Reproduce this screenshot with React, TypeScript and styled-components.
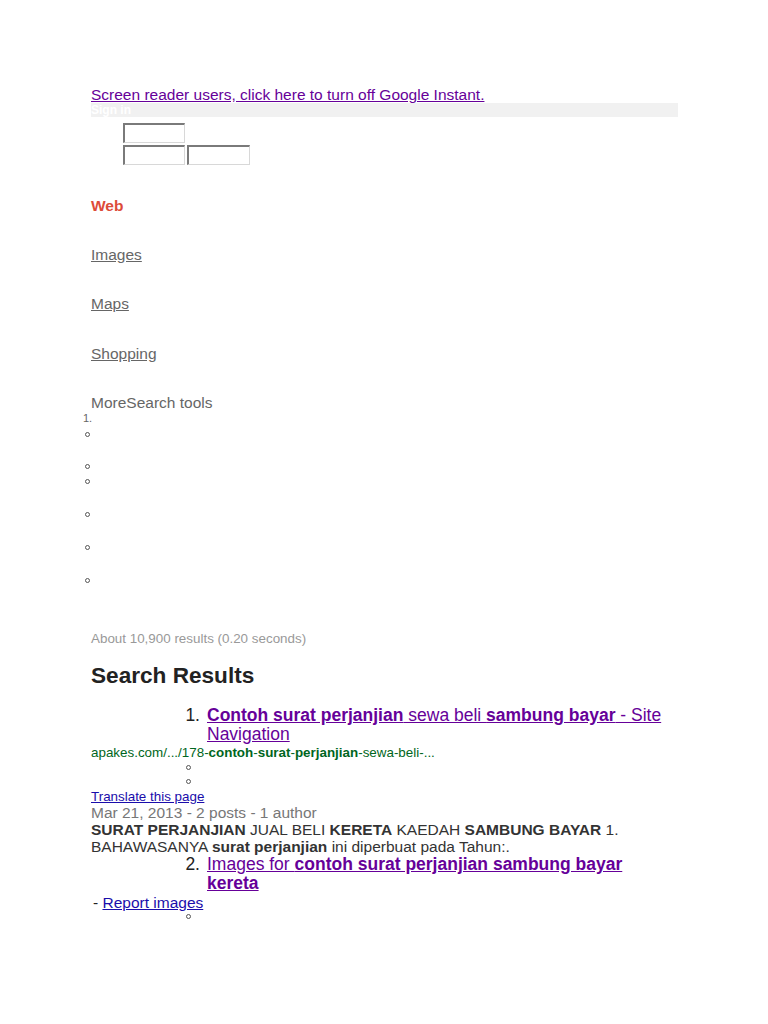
import React from "react";
import styled, { createGlobalStyle } from "styled-components";

const GlobalStyle = createGlobalStyle`
	html, body {
		margin: 0;
		padding: 0;
		background: #fff;
	}
	body {
		font-family: "Liberation Sans", Arial, sans-serif;
		color: #222;
	}
`;

const Page = styled.div`
	width: 768px;
	min-height: 1024px;
	padding: 86px 100px 0 91px;
	box-sizing: border-box;
`;

const InstantLink = styled.a`
	display: block;
	font-size: 15.5px;
	line-height: 17px;
	color: #660099;
	text-decoration: underline;
`;

const SignInBar = styled.div`
	height: 14px;
	width: 587px;
	background: #f1f1f1;
`;

const SignIn = styled.span`
	display: block;
	color: #fff;
	font-size: 12px;
	font-weight: bold;
	line-height: 14px;
`;

const InputRow = styled.div<{ $top: number }>`
	display: flex;
	gap: 2px;
	margin: ${(p) => p.$top}px 0 0 32px;
`;

const Field = styled.input<{ $w: number }>`
	box-sizing: border-box;
	width: ${(p) => p.$w}px;
	height: 20px;
	margin: 0;
	padding: 0;
	background: #fff;
	border-style: solid;
	border-width: 2px 1px 1px 2px;
	border-color: #7a7a7a #d8d8d8 #d8d8d8 #7a7a7a;
`;

const Nav = styled.div`
	margin-top: 32px;
`;

const NavItem = styled.a<{ $active?: boolean }>`
	display: block;
	height: 49.2px;
	font-size: 15.5px;
	line-height: 17px;
	color: ${(p) => (p.$active ? "#dd4b39" : "#666")};
	font-weight: ${(p) => (p.$active ? "bold" : "normal")};
	text-decoration: ${(p) => (p.$active ? "none" : "underline")};
`;

const MoreTools = styled.div`
	font-size: 15.5px;
	line-height: 17px;
	color: #666;
`;

const SmallNum = styled.div`
	font-size: 11px;
	line-height: 13px;
	color: #666;
	margin: 1px 0 3px -8px;
`;

const BulletRow = styled.div<{ $h: number; $indent?: boolean }>`
	height: ${(p) => p.$h}px;
	display: flex;
	align-items: center;
	margin-left: ${(p) => (p.$indent ? 95 : -6)}px;
`;

const Circle = styled.span`
	display: block;
	width: 5px;
	height: 5px;
	box-sizing: border-box;
	border: 1px solid #555;
	border-radius: 50%;
`;

const Spacer = styled.div<{ $h: number }>`
	height: ${(p) => p.$h}px;
`;

const Stats = styled.div`
	font-size: 13.4px;
	line-height: 16px;
	color: #999;
`;

const Heading = styled.h2`
	margin: 16px 0 0;
	font-size: 22.6px;
	line-height: 26px;
	font-weight: bold;
	color: #222;
`;

const ResultHead = styled.div<{ $top: number }>`
	display: grid;
	grid-template-columns: 116px 1fr;
	margin-top: ${(p) => p.$top}px;
	font-size: 17.5px;
	line-height: 19.5px;
`;

const ResultNum = styled.span`
	text-align: right;
	padding-right: 7px;
	color: #222;
`;

const ResultTitle = styled.a`
	color: #660099;
	text-decoration: underline;
`;

const Url = styled.div`
	font-size: 13.4px;
	line-height: 16px;
	color: #006621;
`;

const SmallLink = styled.a`
	display: block;
	font-size: 13.4px;
	line-height: 15px;
	color: #1a0dab;
	text-decoration: underline;
`;

const Meta = styled.div`
	font-size: 15.5px;
	line-height: 17px;
	color: #777;
`;

const Snippet = styled.div`
	font-size: 15.5px;
	line-height: 17px;
	color: #333;
`;

const ReportRow = styled.div`
	font-size: 15.5px;
	line-height: 17px;
	color: #222;
	margin-left: 2px;
`;

const ReportLink = styled.a`
	color: #1a0dab;
	text-decoration: underline;
`;

export default function App() {
	return (
		<>
			<GlobalStyle />
			<Page>
				<InstantLink>Screen reader users, click here to turn off Google Instant.</InstantLink>
				<SignInBar>
					<SignIn>Sign in</SignIn>
				</SignInBar>
				<InputRow $top={6}>
					<Field $w={62} />
				</InputRow>
				<InputRow $top={2}>
					<Field $w={62} />
					<Field $w={63} />
				</InputRow>

				<Nav>
					<NavItem $active>Web</NavItem>
					<NavItem>Images</NavItem>
					<NavItem>Maps</NavItem>
					<NavItem>Shopping</NavItem>
					<MoreTools>MoreSearch tools</MoreTools>
				</Nav>
				<SmallNum>1.</SmallNum>
				<BulletRow $h={14}><Circle /></BulletRow>
				<Spacer $h={18} />
				<BulletRow $h={14}><Circle /></BulletRow>
				<BulletRow $h={16}><Circle /></BulletRow>
				<Spacer $h={17} />
				<BulletRow $h={16}><Circle /></BulletRow>
				<Spacer $h={17} />
				<BulletRow $h={16}><Circle /></BulletRow>
				<Spacer $h={17} />
				<BulletRow $h={16}><Circle /></BulletRow>

				<Spacer $h={42} />
				<Stats>About 10,900 results (0.20 seconds)</Stats>
				<Heading>Search Results</Heading>

				<ResultHead $top={17}>
					<ResultNum>1.</ResultNum>
					<ResultTitle>
						<b>Contoh surat perjanjian</b> sewa beli <b>sambung bayar</b> - Site Navigation
					</ResultTitle>
				</ResultHead>
				<Url>
					apakes.com/.../178-<b>contoh</b>-<b>surat</b>-<b>perjanjian</b>-sewa-beli-...
				</Url>
				<BulletRow $h={14} $indent><Circle /></BulletRow>
				<BulletRow $h={14} $indent><Circle /></BulletRow>
				<SmallLink>Translate this page</SmallLink>
				<Meta>Mar 21, 2013 - 2 posts - 1 author</Meta>
				<Snippet>
					<b>SURAT PERJANJIAN</b> JUAL BELI <b>KERETA</b> KAEDAH <b>SAMBUNG BAYAR</b> 1. BAHAWASANYA{" "}
					<b>surat perjanjian</b> ini diperbuat pada Tahun:.
				</Snippet>

				<ResultHead $top={0}>
					<ResultNum>2.</ResultNum>
					<ResultTitle>
						Images for <b>contoh surat perjanjian sambung bayar kereta</b>
					</ResultTitle>
				</ResultHead>
				<ReportRow>
					- <ReportLink>Report images</ReportLink>
				</ReportRow>
				<BulletRow $h={12} $indent><Circle /></BulletRow>
			</Page>
		</>
	);
}
